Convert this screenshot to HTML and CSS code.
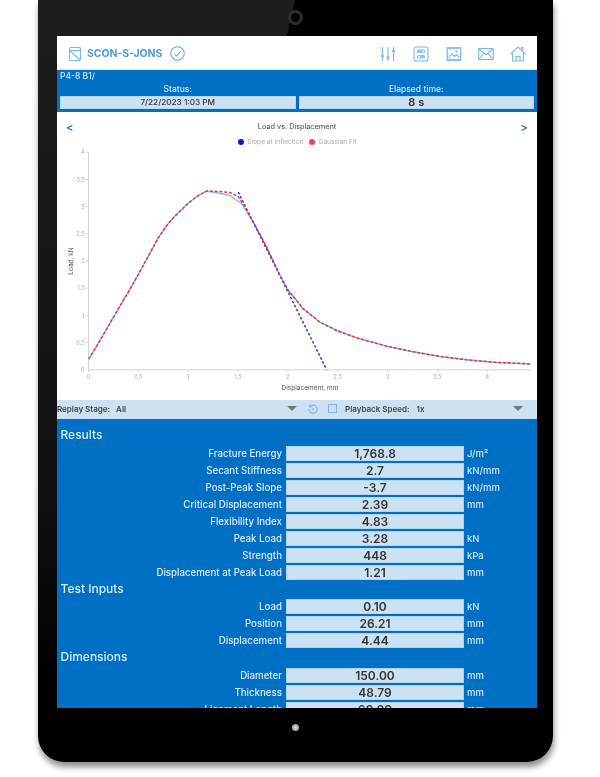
FILE: index.html
```html
<!DOCTYPE html>
<html lang="en">
<head>
  <meta charset="UTF-8" />
  <meta name="viewport" content="width=device-width, initial-scale=1.0" />
  <title>SCON-S-JONS</title>
  <link rel="stylesheet" href="styles.css">
</head>
<body>
  <div class="tablet">
    <div class="bezel-top"><div class="camera"></div></div>
    <div class="screen">
      <header class="topbar">
        <div class="topbar-left">
          <svg class="icon" viewBox="0 0 14 16"><rect x="1.5" y="1.5" width="11" height="13" rx="1.5"/><path d="M1.5 4.5h11M2 5l10 9"/></svg>
          <span class="sample-name">SCON-S-JONS</span>
          <svg class="icon check" viewBox="0 0 16 16"><circle cx="8" cy="8" r="7.2"/><path d="M4.8 8.4l2.2 2.3 4.2-5"/></svg>
        </div>
        <div class="topbar-right">
          <svg class="icon" viewBox="0 0 16 16"><path d="M2.5 1v14M8 1v14M13.5 1v14"/><circle class="solid" cx="2.5" cy="10" r="1.7"/><circle class="solid" cx="8" cy="11.5" r="1.7"/><circle class="solid" cx="13.5" cy="5" r="1.7"/></svg>
          <svg class="icon" viewBox="0 0 16 16"><rect x="1" y="1" width="14" height="14" rx="2"/><rect class="solid" x="4" y="3.5" width="8" height="3.6" rx="1.2"/><rect class="solid" x="4" y="8.9" width="8" height="3.6" rx="1.2"/><circle class="hole" cx="10" cy="5.3" r="0.9"/><circle class="hole" cx="6" cy="10.7" r="0.9"/></svg>
          <svg class="icon photo" viewBox="0 0 16 16"><rect class="solid" x="0.5" y="1" width="15" height="14"/><rect class="hole" x="2" y="3" width="12" height="10"/><path d="M2.5 12l3.5-4 2.5 2.5 2-2 3 3"/><circle class="solid" cx="10.5" cy="5.5" r="1.2"/></svg>
          <svg class="icon" viewBox="0 0 16 16"><rect x="0.7" y="2.5" width="14.6" height="11" rx="0.8"/><path d="M1 3l7 5.8L15 3M1 13l5-5.4M15 13l-5-5.4"/></svg>
          <svg class="icon" viewBox="0 0 16 16"><path d="M0.6 8.2L8 1l7.4 7.2M2.6 6.6V15h10.8V6.6M6 15v-4.5h4V15M11.5 3V1.5h1.5v3"/></svg>
        </div>
      </header>

      <section class="info">
        <div class="path">P4-8 B1/</div>
        <div class="info-grid">
          <div class="info-cell">
            <div class="info-label">Status:</div>
            <div class="info-value">7/22/2023 1:03 PM</div>
          </div>
          <div class="info-cell">
            <div class="info-label">Elapsed time:</div>
            <div class="info-value big">8 s</div>
          </div>
        </div>
      </section>

      <section class="chart">
        <div class="chart-head">
          <span class="nav">&lt;</span>
          <span class="chart-title">Load vs. Displacement</span>
          <span class="nav">&gt;</span>
        </div>
        <div class="legend">
          <span class="dot blue"></span><span class="legend-text">Slope at Inflection</span>
          <span class="dot red"></span><span class="legend-text">Gaussian Fit</span>
        </div>
        <svg class="plot" viewBox="57 146.5 480 253">
          <path class="axis" d="M88.5 151.7V369.3H531"/>
          <path class="axis" d="M85.5 151.7h3M85.5 179h3M85.5 206h3M85.5 233.3h3M85.5 260.5h3M85.5 287.7h3M85.5 315h3M85.5 342h3M88.5 369.3v2M138.3 369.3v2M188.2 369.3v2M238 369.3v2M287.9 369.3v2M337.7 369.3v2M387.6 369.3v2M437.4 369.3v2M487.3 369.3v2"/>
          <g class="tick-y">
            <text x="84.5" y="153.7">4</text>
            <text x="84.5" y="181">3.5</text>
            <text x="84.5" y="208">3</text>
            <text x="84.5" y="235.3">2.5</text>
            <text x="84.5" y="262.5">2</text>
            <text x="84.5" y="289.7">1.5</text>
            <text x="84.5" y="317">1</text>
            <text x="84.5" y="344">0.5</text>
            <text x="84.5" y="371.3">0</text>
          </g>
          <g class="tick-x">
            <text x="88.5" y="378">0</text>
            <text x="138.3" y="378">0.5</text>
            <text x="188.2" y="378">1</text>
            <text x="238" y="378">1.5</text>
            <text x="287.9" y="378">2</text>
            <text x="337.7" y="378">2.5</text>
            <text x="387.6" y="378">3</text>
            <text x="437.4" y="378">3.5</text>
            <text x="487.3" y="378">4</text>
          </g>
          <text class="axis-title" x="310" y="389.5">Displacement, mm</text>
          <text class="axis-title" transform="translate(72.5 260.5) rotate(-90)">Load, kN</text>
          <polyline class="line-data" points="88.7,358.7 100,340 118.3,308.3 128.3,291.7 138.3,274 148.3,255.7 158.3,237.3 166.7,225 175,215.5 188.3,202.7 198.3,195 206.7,190.7 218,192.5 230,195 241.7,203.3 253.3,221.7 266.7,246.7 280,275 288.3,290 303.3,308.3 320,321.7 336.7,330 356.7,337.3 386.7,345.7 413.3,351.3 440,356 466.7,359.3 493.3,361.7 530.7,363.8"/>
          <polyline class="line-slope" points="238.3,191.7 326.7,369.3"/>
          <polyline class="line-fit" points="88.7,358.7 100,340 118.3,308.3 128.3,291.7 138.3,274 148.3,255.7 158.3,237.3 166.7,225 175,215.5 188.3,202.7 198.3,195 206.7,190.5 218,191 230,192 238,196 245,206 253.3,221.7 266.7,246.7 280,275 288.3,290 303.3,308.3 320,321.7 336.7,330 356.7,337.3 386.7,345.7 413.3,351.3 440,356 466.7,359.3 493.3,361.7 530.7,363.3"/>
        </svg>
      </section>

      <div class="replay">
        <div class="replay-stage">
          <span class="replay-label">Replay Stage:</span>
          <span class="replay-label">All</span>
        </div>
        <span class="arrow"></span>
        <svg class="icon replay-icon" viewBox="0 0 12 12"><path d="M2.2 3A5 5 0 1 1 1 6M2 1v2.4h2.4"/><circle class="solid" cx="6" cy="6" r="1.4"/></svg>
        <span class="stop"></span>
        <div class="replay-speed">
          <span class="replay-label">Playback Speed:</span>
          <span class="replay-label">1x</span>
        </div>
        <span class="arrow"></span>
      </div>

      <main class="details">
        <h2>Results</h2>
        <div class="rows">
          <div class="label">Fracture Energy</div><div class="field">1,768.8</div><div class="unit">J/m²</div>
          <div class="label">Secant Stiffness</div><div class="field">2.7</div><div class="unit">kN/mm</div>
          <div class="label">Post-Peak Slope</div><div class="field">-3.7</div><div class="unit">kN/mm</div>
          <div class="label">Critical Displacement</div><div class="field">2.39</div><div class="unit">mm</div>
          <div class="label">Flexibility Index</div><div class="field">4.83</div><div class="unit"></div>
          <div class="label">Peak Load</div><div class="field">3.28</div><div class="unit">kN</div>
          <div class="label">Strength</div><div class="field">448</div><div class="unit">kPa</div>
          <div class="label">Displacement at Peak Load</div><div class="field">1.21</div><div class="unit">mm</div>
        </div>
        <h2>Test Inputs</h2>
        <div class="rows">
          <div class="label">Load</div><div class="field">0.10</div><div class="unit">kN</div>
          <div class="label">Position</div><div class="field">26.21</div><div class="unit">mm</div>
          <div class="label">Displacement</div><div class="field">4.44</div><div class="unit">mm</div>
        </div>
        <h2>Dimensions</h2>
        <div class="rows">
          <div class="label">Diameter</div><div class="field">150.00</div><div class="unit">mm</div>
          <div class="label">Thickness</div><div class="field">48.79</div><div class="unit">mm</div>
          <div class="label">Ligament Length</div><div class="field">60.00</div><div class="unit">mm</div>
        </div>
      </main>
    </div>
    <div class="bezel-bottom"><div class="home-button"></div></div>
  </div>
</body>
</html>
```

FILE: styles.css
```css
html, body {
  margin: 0;
  height: 100%;
  overflow: hidden;
  background: #fff;
}
body {
  font-family: 'Inter', 'Liberation Sans', sans-serif;
  color: #333;
}
/* the source is a scaled-down photo of a device, so everything is a bit soft */
.tablet {
  width: 515px;
  height: 762px;
  margin-left: 38px;
  padding: 0 16px 0 19px;
  box-sizing: border-box;
  border-radius: 0 0 26px 26px;
  background:
    linear-gradient(102.9deg, transparent 250.6px, #000 250.6px),
    linear-gradient(to bottom, #1d1d1d, #101010 500px, #000 680px);
  box-shadow: 1px 5px 6px rgba(0, 0, 0, 0.45);
  filter: blur(0.35px);
}
.bezel-top {
  height: 36px;
  display: flex;
  justify-content: center;
  align-items: center;
  padding-bottom: 2px;
  box-sizing: border-box;
}
.camera {
  width: 9px;
  height: 9px;
  margin-right: 3px;
  border: 3px solid #2e2e2e;
  border-radius: 50%;
  background: #050505;
}
.screen {
  width: 480px;
  height: 672px;
  overflow: hidden;
  background: #fff;
}
.bezel-bottom {
  height: 54px;
  display: flex;
  justify-content: center;
  align-items: center;
  padding-bottom: 16px;
  box-sizing: border-box;
}
.home-button {
  width: 7px;
  height: 7px;
  margin-right: 4px;
  border-radius: 50%;
  background: radial-gradient(circle, #ddd, #888);
}

.icon {
  width: 16px;
  height: 16px;
  fill: none;
  stroke: #7ab6ec;
  stroke-width: 1.1;
}
.icon .solid {
  fill: #8fc1ef;
  stroke: none;
}
.icon .hole {
  fill: #fff;
  stroke: none;
}
.topbar {
  height: 33px;
  box-sizing: border-box;
  display: flex;
  justify-content: space-between;
  align-items: center;
  padding: 2px 11px 0 10px;
}
.topbar-left {
  display: flex;
  align-items: center;
  gap: 4px;
}
.sample-name {
  font-size: 10.4px;
  font-weight: 700;
  color: #4a9ae0;
}
.check {
  width: 15px;
  height: 15px;
  margin-left: 4px;
  stroke: #5ea6e6;
}
.topbar-right {
  display: flex;
  align-items: center;
  gap: 16.5px;
}
.photo {
  margin-left: 1px;
  margin-right: -1px;
}

.info {
  height: 43px;
  box-sizing: border-box;
  padding: 1px 3px 0;
  background: #0070c4;
  border-top: 1px solid #d7e7f4;
}
.path {
  font-size: 8.5px;
  line-height: 10px;
  font-weight: 500;
  color: #d4e6f6;
}
.info-grid {
  display: grid;
  grid-template-columns: 1fr 1fr;
  gap: 3px;
  margin-top: 3px;
}
.info-label {
  font-size: 8.5px;
  line-height: 11px;
  font-weight: 500;
  text-align: center;
  color: #d4e6f6;
}
.info-value {
  height: 13px;
  line-height: 13px;
  margin-top: 1px;
  font-size: 8.2px;
  font-weight: 500;
  text-align: center;
  background: #cce2f2;
  box-shadow: inset 0 0 0 1px #b6d5ee;
}
.info-value.big {
  font-size: 11px;
  font-weight: 600;
}

.chart {
  height: 287.5px;
}
.chart-head {
  display: flex;
  justify-content: space-between;
  align-items: center;
  height: 10px;
  padding: 9.5px 9px 0;
}
.nav {
  font-size: 11px;
  font-weight: 700;
  color: #2f82d4;
}
.chart-title {
  font-size: 7.3px;
  color: #444;
}
.legend {
  display: flex;
  justify-content: center;
  align-items: center;
  height: 10px;
  margin-top: 5px;
  padding-left: 7px;
}
.dot {
  width: 6px;
  height: 6px;
  border-radius: 50%;
  margin-right: 3px;
}
.dot.blue {
  background: #0a12e6;
}
.dot.red {
  background: #f2404e;
}
.legend-text {
  font-size: 6.6px;
  color: #aaa;
  margin-right: 6px;
}
.plot {
  display: block;
  width: 480px;
  height: 253px;
}
.axis {
  fill: none;
  stroke: #c9c9c9;
  stroke-width: 0.8;
}
.tick-y text, .tick-x text {
  font-size: 5.5px;
  fill: #aaa;
}
.tick-y text {
  text-anchor: end;
}
.tick-x text, .axis-title {
  text-anchor: middle;
}
.axis-title {
  font-size: 6.5px;
  fill: #555;
}
.line-data {
  fill: none;
  stroke: #7fbce8;
  stroke-width: 1.4;
  stroke-linejoin: round;
}
.line-slope {
  fill: none;
  stroke: #2238ee;
  stroke-width: 1.5;
  stroke-dasharray: 2.5 2;
}
.line-fit {
  fill: none;
  stroke: #f0303f;
  stroke-width: 1.5;
  stroke-dasharray: 3 1.8;
  stroke-linejoin: round;
}

.replay {
  height: 19px;
  display: flex;
  align-items: center;
  padding-bottom: 1px;
  background: #cce2f2;
  box-sizing: border-box;
}
.replay-stage {
  width: 230px;
  display: flex;
  gap: 6px;
}
.replay-speed {
  width: 168px;
  display: flex;
  gap: 7px;
  margin-left: 8px;
}
.replay-label {
  font-size: 8px;
  font-weight: 600;
  color: #444;
}
.arrow {
  width: 0;
  height: 0;
  border-left: 5px solid transparent;
  border-right: 5px solid transparent;
  border-top: 5px solid #777;
}
.replay-icon {
  width: 10px;
  height: 10px;
  margin-left: 11px;
  stroke: #5ea6e6;
}
.stop {
  width: 7px;
  height: 7px;
  margin-left: 10px;
  border: 1px solid #7ab6ec;
}

.details {
  height: 290px;
  box-sizing: border-box;
  padding-top: 9.5px;
  background: #0070c4;
  overflow: hidden;
}
.details h2 {
  margin: 0 0 4.5px;
  padding: 1px 0 0 3.5px;
  font-size: 12px;
  line-height: 12px;
  font-weight: 500;
  color: #dbeaf7;
}
.rows {
  display: grid;
  grid-template-columns: 225px 178px 1fr;
  grid-auto-rows: 15px;
  row-gap: 2px;
  column-gap: 4px;
  margin-bottom: 2px;
}
.label {
  font-size: 9.7px;
  line-height: 15px;
  font-weight: 500;
  text-align: right;
  color: #dbeaf7;
}
.field {
  font-size: 12px;
  line-height: 15px;
  font-weight: 600;
  text-align: center;
  background: #cce2f2;
  box-shadow: inset 0 0 0 1px #b4d4ee;
}
.unit {
  margin-left: -1px;
  font-size: 9.5px;
  line-height: 15px;
  font-weight: 500;
  color: #cfe4f5;
}
```
